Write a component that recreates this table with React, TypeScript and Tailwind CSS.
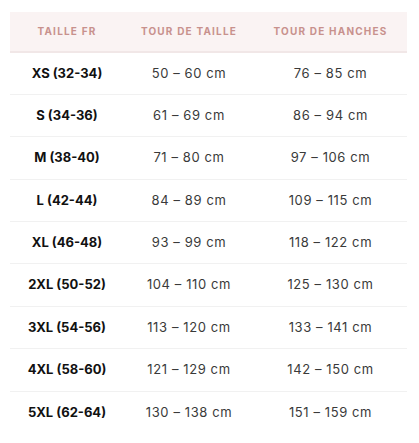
const rows = [
  ["XS (32-34)", "50 – 60 cm", "76 – 85 cm"],
  ["S (34-36)", "61 – 69 cm", "86 – 94 cm"],
  ["M (38-40)", "71 – 80 cm", "97 – 106 cm"],
  ["L (42-44)", "84 – 89 cm", "109 – 115 cm"],
  ["XL (46-48)", "93 – 99 cm", "118 – 122 cm"],
  ["2XL (50-52)", "104 – 110 cm", "125 – 130 cm"],
  ["3XL (54-56)", "113 – 120 cm", "133 – 141 cm"],
  ["4XL (58-60)", "121 – 129 cm", "142 – 150 cm"],
  ["5XL (62-64)", "130 – 138 cm", "151 – 159 cm"],
];

export default function App() {
  return (
    <div className="bg-white w-[419px] h-[443px] pt-[12px] pl-[10px] font-['Inter',sans-serif]">
      <table className="w-[397px] border-collapse table-fixed">
        <colgroup>
          <col className="w-[114px]" />
          <col className="w-[130px]" />
          <col className="w-[153px]" />
        </colgroup>
        <thead>
          <tr className="bg-[#faf3f3] border-b-2 border-[#f1e7e7]">
            {["Taille FR", "Tour de taille", "Tour de hanches"].map((h) => (
              <th
                key={h}
                className="h-[40px] text-center uppercase text-[10px] font-bold tracking-[1.2px] text-[#c8918d]"
              >
                {h}
              </th>
            ))}
          </tr>
        </thead>
        <tbody>
          {rows.map((r, i) => (
            <tr
              key={r[0]}
              className={i < rows.length - 1 ? "border-b border-[#f1f1f1]" : ""}
            >
              <td className="h-[42.4px] text-center text-[13px] font-bold text-[#111]">
                {r[0]}
              </td>
              <td className="text-center text-[13px] tracking-[0.6px] text-[#3a3a3a]">{r[1]}</td>
              <td className="text-center text-[13px] tracking-[0.6px] text-[#3a3a3a]">{r[2]}</td>
            </tr>
          ))}
        </tbody>
      </table>
    </div>
  );
}
